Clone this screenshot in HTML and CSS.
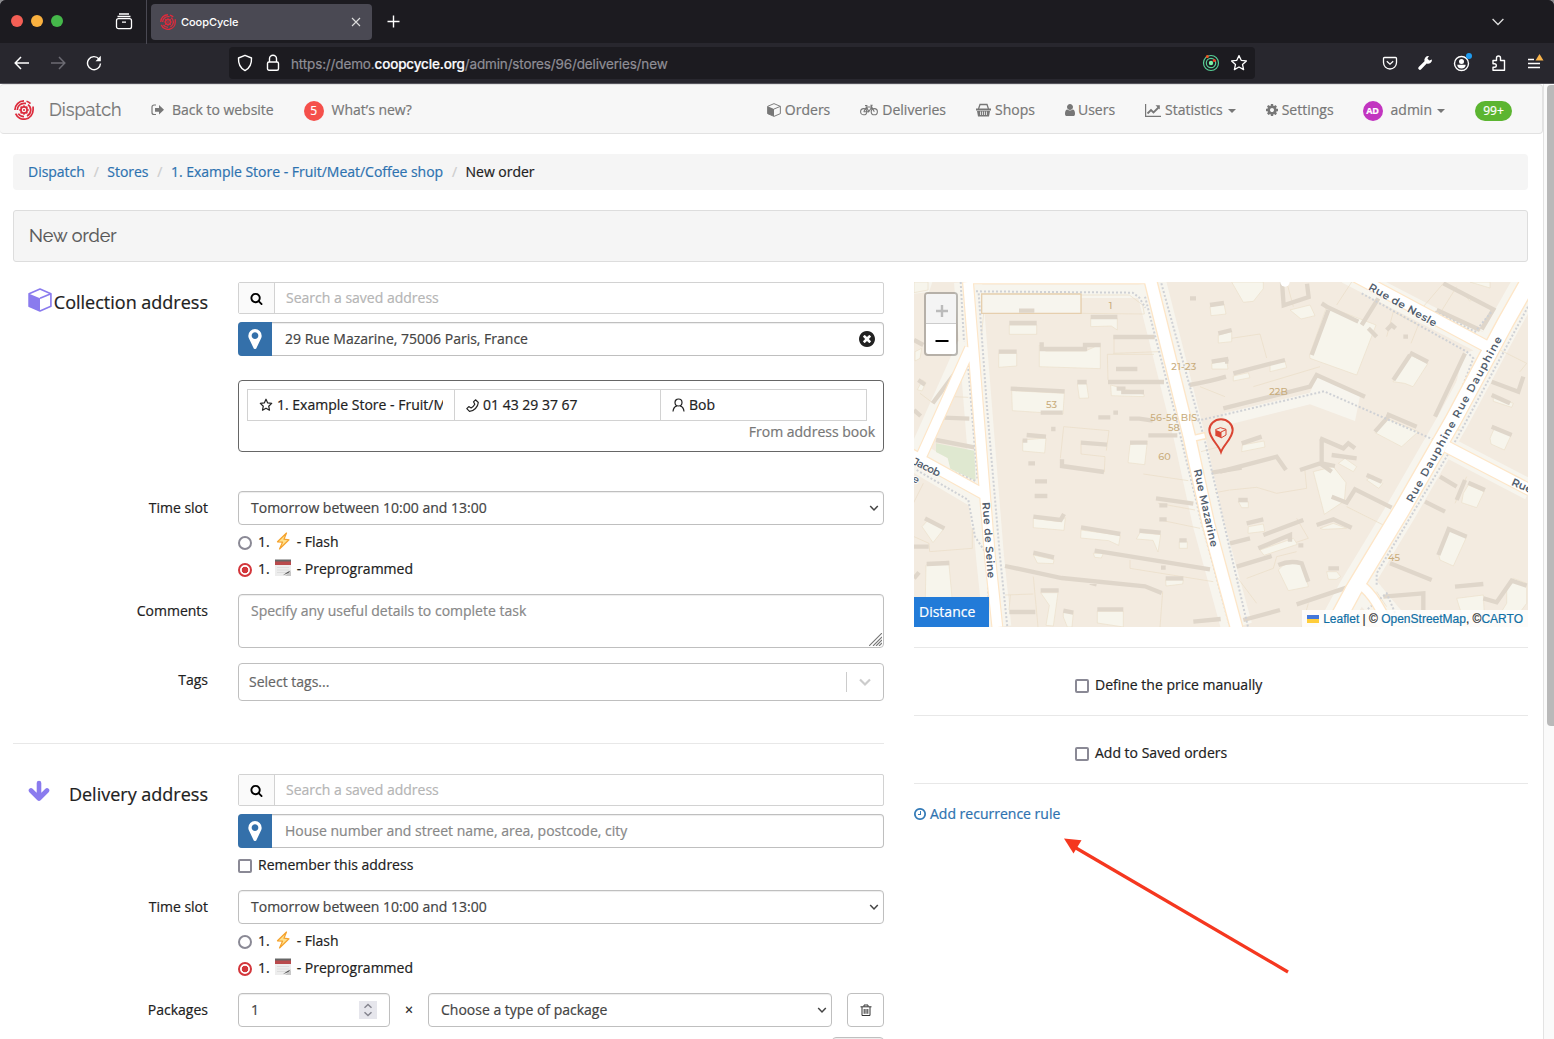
FILE: index.html
```html
<!DOCTYPE html>
<html lang="en">
<head>
<meta charset="utf-8">
<title>CoopCycle</title>
<link rel="stylesheet" href="styles.css">
</head>
<body>
<svg class="defs" width="0" height="0" aria-hidden="true">
  <symbol id="logo" viewBox="0 0 20 20"><g fill="none" stroke="#dc2b3c" stroke-width="1.7"><path d="M10 .9A9.1 9.1 0 0 0 .9 10M1.6 13.6A9.1 9.1 0 0 0 19.1 10V6.5M3.3 10A6.7 6.7 0 0 1 10 3.3h2M4.3 13.6A6.7 6.7 0 0 0 10 16.7M12.5 1.3a9.1 9.1 0 0 1 4 2.4M14 4.6A6.7 6.7 0 0 1 13 16"/><circle cx="10" cy="10" r="3.1"/></g><path d="M10 5.2v2M10 12.8v2M5.2 10h2M12.8 10h2M6.6 6.6L8 8M12 12l1.4 1.4M13.4 6.6L12 8M6.6 13.4L8 12" stroke="#dc2b3c" stroke-width="1.5"/><circle cx="10" cy="10" r="1" fill="#dc2b3c"/></symbol>
  <symbol id="search" viewBox="0 0 1792 1792"><path d="M1216 832q0-185-131.5-316.5t-316.5-131.5-316.5 131.5-131.5 316.5 131.5 316.5 316.5 131.5 316.5-131.5 131.5-316.5zm512 832q0 52-38 90t-90 38q-54 0-90-38l-343-342q-179 124-399 124-143 0-273.5-55.5t-225-150-150-225-55.5-273.5 55.5-273.5 150-225 225-150 273.5-55.5 273.5 55.5 225 150 150 225 55.5 273.5q0 220-124 399l343 343q37 37 37 90z"/></symbol>
  <symbol id="marker" viewBox="384 128 1024 1536"><path d="M1152 640q0-106-75-181t-181-75-181 75-75 181 75 181 181 75 181-75 75-181zm256 0q0 109-33 179l-364 774q-16 33-47.5 52t-67.5 19-67.5-19-46.5-52l-365-774q-33-70-33-179 0-212 150-362t362-150 362 150 150 362z"/></symbol>
  <symbol id="cube" viewBox="0 0 22 22"><path d="M1 5.3L11 1l10 4.3v11.4L11 21 1 16.7z" fill="none" stroke="currentColor" stroke-width="1.5" stroke-linejoin="round"/><path d="M1 5.3L11 9.5V21L1 16.7z" fill="currentColor"/><path d="M11 9.5L21 5.3" stroke="currentColor" stroke-width="1.5"/></symbol>
  <symbol id="bolt" viewBox="0 0 16 18"><path d="M11.5 1L2.5 9.8l5 .4L4.500 17 14 7.800l-5-.6z" fill="#ffe08a" stroke="#f5a22d" stroke-width="1.2" stroke-linejoin="round"/></symbol>
  <symbol id="pad" viewBox="0 0 16 18"><path d="M0 1h16v16H0z" fill="#ededed"/><path d="M0 1h16v5H0z" fill="#b94a4c"/><path d="M0 .5h16v2H0z" fill="#666"/><path d="M2 8.500h12M2 11h12M2 13.500h9" stroke="#ddd"/><path d="M10 17h6v-5z" fill="#c8c8c8"/><path d="M8 16.300l4-3 3.500-1.800-2 2.600z" fill="#555"/></symbol>
  <symbol id="chev" viewBox="0 0 10 10"><path d="M1.2 3L5 7l3.800-4" fill="none" stroke="currentColor" stroke-width="1.5"/></symbol>
</svg>

<header class="browser">
  <div class="tabs">
    <span class="light red"></span><span class="light amber"></span><span class="light green"></span>
    <svg class="view" width="18" height="18" viewBox="0 0 18 18" fill="none" stroke="#fff" stroke-width="1.3"><path d="M4 1h10M2.500 3.500h13"/><rect x="1.500" y="5.700" width="15" height="10" rx="2"/><path d="M7 9.200h4"/></svg>
    <div class="tab"><svg width="16" height="16"><use href="#logo"/></svg><span>CoopCycle</span><svg class="close" width="10" height="10" viewBox="0 0 10 10"><path d="M1 1l8 8M9 1L1 9" stroke="#ddd" stroke-width="1.1"/></svg></div>
    <svg class="plus" width="13" height="13" viewBox="0 0 13 13"><path d="M6.500 .5v12M.5 6.500h12" stroke="#fff" stroke-width="1.4"/></svg>
    <svg class="alltabs" width="12" height="8" viewBox="0 0 12 8"><path d="M.6 1L6 6.500 11.400 1" fill="none" stroke="#ddd" stroke-width="1.3"/></svg>
  </div>
  <div class="toolbar">
    <svg class="back" width="16" height="14" viewBox="0 0 16 14" fill="none" stroke="#fff" stroke-width="1.5"><path d="M15 7H1.500M7 1L1.200 7 7 13"/></svg>
    <svg class="fwd" width="16" height="14" viewBox="0 0 16 14" fill="none" stroke="#6c6b73" stroke-width="1.5"><path d="M1 7h13.500M9 1l5.800 6L9 13"/></svg>
    <svg class="reload" width="16" height="16" viewBox="0 0 16 16"><path d="M13 4A6.500 6.500 0 1 0 14.500 8.500" fill="none" stroke="#fff" stroke-width="1.4"/><path d="M14.800 .8v5.400H9.500z" fill="#fff"/></svg>
    <div class="urlbar">
      <svg width="16" height="18" viewBox="0 0 16 18" fill="none" stroke="#fff" stroke-width="1.4"><path d="M8 1.300L14.500 4c.3 5.500-1.500 10-6.500 12.600C3 14 1.200 9.500 1.500 4z" stroke-linejoin="round"/></svg>
      <svg class="lock" width="14" height="18" viewBox="0 0 14 18" fill="none" stroke="#fff" stroke-width="1.4"><rect x="1.500" y="8" width="11" height="8.300" rx="1.500"/><path d="M3.500 8V4.800a3.500 3.500 0 0 1 7 0V8"/></svg>
      <span class="url">https://demo.<b>coopcycle.org</b>/admin/stores/96/deliveries/new</span>
      <svg class="radar" width="18" height="18" viewBox="0 0 18 18" fill="none" stroke="#57cf96" stroke-width="1.2"><circle cx="9" cy="9" r="7.500"/><circle cx="9" cy="9" r="4.700"/><circle cx="9" cy="9" r="2.200" fill="#7df3a6" stroke="none"/><circle cx="5.300" cy="2.500" r="1.500" fill="#ee5a24" stroke="none"/><circle cx="12.300" cy="6.400" r="1.500" fill="#ee3f24" stroke="none"/></svg>
      <svg width="18" height="18" viewBox="0 0 18 18"><path d="M9 1.600l2.200 4.700 5.200.6-3.900 3.500 1.100 5.200L9 13l-4.600 2.600 1.100-5.200L1.600 6.900l5.200-.6z" fill="none" stroke="#fff" stroke-width="1.3" stroke-linejoin="round"/></svg>
    </div>
    <div class="tools">
      <svg width="16" height="16" viewBox="0 0 16 16" fill="none" stroke="#fff" stroke-width="1.3"><path d="M2.500 2.500h11a1 1 0 0 1 1 1V7.500a6.500 6.500 0 0 1-13 0v-4a1 1 0 0 1 1-1z"/><path d="M4.800 6.300L8 9.200l3.200-2.900"/></svg>
      <svg width="16" height="16" viewBox="0 0 16 16"><path d="M15 4.500a4 4 0 0 1-5.300 4L4.200 14.300a1.500 1.500 0 0 1-2.500-2.400L7.500 6.200A4.100 4.100 0 0 1 12 1l-1.600 2.600 1.800 1.900z" fill="#fff"/></svg>
      <svg width="20" height="20" viewBox="0 0 20 20"><circle cx="9.500" cy="10.500" r="7" fill="none" stroke="#fff" stroke-width="1.4"/><circle cx="9.500" cy="8.500" r="2.500" fill="#fff"/><path d="M5.300 11.800h8.400a4.200 3.600 0 0 1-8.400 0z" fill="#fff"/><circle cx="17" cy="3" r="3" fill="#1e9bf0"/></svg>
      <svg width="16" height="18" viewBox="0 0 16 18"><path d="M2 6.500h3.500V4a2 2 0 0 1 4 0v2.500H13.500V16.300H2v-3h1.500a1.800 1.800 0 0 0 0-3.600H2z" fill="none" stroke="#fff" stroke-width="1.4" stroke-linejoin="round"/></svg>
      <svg width="18" height="20" viewBox="0 0 18 20"><path d="M2 6.500h6M2 10.500h12M2 14.500h12" stroke="#fff" stroke-width="1.4"/><path d="M13.500 1L17.500 7.500H9.500z" fill="#f9b44c"/></svg>
    </div>
  </div>
</header>

<div class="viewport">
<div class="page">
  <nav class="navbar">
    <svg class="brandlogo" width="20" height="20"><use href="#logo"/></svg>
    <span class="brand">Dispatch</span>
    <span class="back-site"><svg width="13" height="12" viewBox="0 0 13 12"><path d="M5 1H3a2 2 0 0 0-2 2v5.500a2 2 0 0 0 2 2h2" fill="none" stroke="#777" stroke-width="1.2"/><path d="M4 4h4V1l5 4.800-5 4.700V7.800H4z" fill="#777"/></svg>Back to website</span>
    <span class="news"><i>5</i>What’s new?</span>
    <ul class="menu">
      <li><svg width="14" height="14"><use href="#cube"/></svg>Orders</li>
      <li><svg width="18" height="12" viewBox="0 0 18 12" fill="none" stroke="#777" stroke-width="1.1"><circle cx="3.700" cy="7.700" r="3.100"/><circle cx="14.300" cy="7.700" r="3.100"/><path d="M3.700 7.700L6.500 3h5.300l2.500 4.700M6.500 3l2.300 4.700 3-4.700-.8-1.800h1.700M3.700 7.700h5.100M5 1.600h2.400"/></svg>Deliveries</li>
      <li><svg width="15" height="14" viewBox="0 0 15 14"><path d="M0 5.500h15v2H0zM1 8h13l-1 5.500H2z" fill="#777"/><path d="M2.500 6L4 1.500h7L12.500 6" fill="none" stroke="#777" stroke-width="1.3"/><path d="M4.500 8.500v3.500M6.500 8.500v3.500M8.500 8.500v3.500M10.500 8.500v3.500" stroke="#f7f7f7" stroke-width=".8"/></svg>Shops</li>
      <li><svg class="usr" width="10" height="12" viewBox="256 128 1280 1536"><path fill="#777" d="M1536 1399q0 109-62.500 187t-150.500 78h-854q-88 0-150.500-78t-62.500-187q0-85 8.500-160.500t31.500-152 58.500-131 94-89 134.500-34.500q131 128 313 128t313-128q76 0 134.500 34.500t94 89 58.500 131 31.500 152 8.500 160.500zm-256-887q0 159-112.500 271.500t-271.500 112.500-271.500-112.500-112.500-271.500 112.500-271.500 271.500-112.500 271.500 112.500 112.500 271.500z"/></svg>Users</li>
      <li><svg width="16" height="13" viewBox="0 0 16 13" fill="none"><path d="M.6 0v12.400H16" stroke="#777" stroke-width="1.2"/><path d="M2.500 9.500L6 6l2.500 2.500L13.500 3.500" stroke="#777" stroke-width="1.8"/><path d="M10.500 1.200h4.300v4.300z" fill="#777"/></svg>Statistics<b class="caret"></b></li>
      <li><svg width="12" height="12" viewBox="128 128 1536 1536"><path fill="#777" d="M1152 896q0-106-75-181t-181-75-181 75-75 181 75 181 181 75 181-75 75-181zm512-109v222q0 12-8 23t-20 13l-185 28q-19 54-39 91 35 50 107 138 10 12 10 25t-9 23q-27 37-99 108t-94 71q-12 0-26-9l-138-108q-44 23-91 38-16 136-29 186-7 28-36 28h-222q-14 0-24.500-8.500t-11.500-21.500l-28-184q-49-16-90-37l-141 107q-10 9-25 9-14 0-25-11-126-114-165-168-7-10-7-23 0-12 8-23 15-21 51-66.500t54-70.500q-27-50-41-99l-183-27q-13-2-21-12.500t-8-23.500v-222q0-12 8-23t19-13l186-28q14-46 39-92-40-57-107-138-10-12-10-24 0-10 9-23 26-36 98.500-107.500t94.500-71.500q13 0 26 10l138 107q44-23 91-38 16-136 29-186 7-28 36-28h222q14 0 24.500 8.500t11.500 21.500l28 184q49 16 90 37l142-107q9-9 24-9 13 0 25 10 129 119 165 170 7 8 7 22 0 12-8 23-15 21-51 66.500t-54 70.500q26 50 41 98l183 28q13 2 21 12.500t8 23.500z"/></svg>Settings</li>
      <li><i class="avatar">AD</i>admin<b class="caret"></b></li>
      <li><i class="count">99+</i></li>
    </ul>
  </nav>

  <ol class="crumbs"><li>Dispatch</li><li>Stores</li><li>1. Example Store - Fruit/Meat/Coffee shop</li><li class="current">New order</li></ol>
  <h1 class="title">New order</h1>

  <main class="columns">
    <form class="form">
      <section>
        <div class="row addr">
          <h2><svg width="24" height="24"><use href="#cube"/></svg>Collection address</h2>
          <div>
            <div class="saved"><span><svg width="13" height="13"><use href="#search"/></svg></span><p>Search a saved address</p></div>
            <div class="place"><span><svg width="14" height="20"><use href="#marker"/></svg></span><p>29 Rue Mazarine, 75006 Paris, France</p><svg class="clear" width="16" height="16" viewBox="128 128 1536 1536"><path d="M1277 1122q0-26-19-45l-181-181 181-181q19-19 19-45 0-27-19-46l-90-90q-19-19-46-19-26 0-45 19l-181 181-181-181q-19-19-45-19-27 0-46 19l-90 90q-19 19-19 46 0 26 19 45l181 181-181 181q-19 19-19 45 0 27 19 46l90 90q19 19 46 19 26 0 45-19l181-181 181 181q19 19 45 19 27 0 46-19l90-90q19-19 19-46zm387-226q0 209-103 385.500t-279.500 279.500-385.500 103-385.500-103-279.500-279.500-103-385.500 103-385.500 279.500-279.500 385.500-103 385.500 103 279.500 279.500 103 385.500z"/></svg></div>
            <div class="book">
              <div class="contact">
                <div><svg width="14" height="14" viewBox="0 0 14 14"><path d="M7 1.200l1.700 3.700 4 .5-3 2.800.8 4L7 10.200l-3.500 2 .8-4-3-2.800 4-.5z" fill="none" stroke="#222" stroke-width="1.2" stroke-linejoin="round"/></svg><span>1. Example Store - Fruit/M</span></div>
                <div><svg width="13" height="13" viewBox="0 0 13 13"><path d="M9.500 .8l2.800 2.700C12 8 8 12 3.500 12.300L.8 9.600l2-2 2.300 1.300C6.700 8 8 6.700 8.800 5.200L7.500 2.800z" fill="none" stroke="#222" stroke-width="1.2" stroke-linejoin="round"/></svg><span>01 43 29 37 67</span></div>
                <div><svg width="13" height="14" viewBox="0 0 13 14" fill="none" stroke="#222" stroke-width="1.2"><circle cx="6.500" cy="4.500" r="3.500"/><path d="M1 13.500c.3-3.300 2.200-5.300 4-5.700M12 13.500c-.3-3.300-2.200-5.300-4-5.700"/></svg><span>Bob</span></div>
              </div>
              <p>From address book</p>
            </div>
          </div>
        </div>
        <div class="row slot"><label>Time slot</label><div>
          <div class="control select">Tomorrow between 10:00 and 13:00<svg width="10" height="10"><use href="#chev"/></svg></div>
          <div class="radio"><i></i>1.<svg width="16" height="18"><use href="#bolt"/></svg>- Flash</div>
          <div class="radio on"><i></i>1.<svg width="16" height="18"><use href="#pad"/></svg>- Preprogrammed</div>
        </div></div>
        <div class="row comments"><label>Comments</label><div class="control area">Specify any useful details to complete task<svg width="13" height="13" viewBox="0 0 13 13"><path d="M0 13L13 0M4 13l9-9M7 13l6-6M10 13l3-3" stroke="#777" stroke-width="1.1"/></svg></div></div>
        <div class="row tags"><label>Tags</label><div class="control tagbox"><span>Select tags...</span><svg width="14" height="14" viewBox="0 0 14 14"><path d="M2 4.500l5 5 5-5" fill="none" stroke="#ccc" stroke-width="2.200"/></svg></div></div>
      </section>
      <hr>
      <section>
        <div class="row addr">
          <h2><svg width="22" height="22" viewBox="0 0 22 22"><path d="M11 3v14M3 10.500l8 8 8-8" fill="none" stroke="#8a7bee" stroke-width="4.600" stroke-linecap="round" stroke-linejoin="round"/></svg>Delivery address</h2>
          <div>
            <div class="saved"><span><svg width="13" height="13"><use href="#search"/></svg></span><p>Search a saved address</p></div>
            <div class="place empty"><span><svg width="14" height="20"><use href="#marker"/></svg></span><p>House number and street name, area, postcode, city</p></div>
            <div class="check"><i></i>Remember this address</div>
          </div>
        </div>
        <div class="row slot2"><label>Time slot</label><div>
          <div class="control select">Tomorrow between 10:00 and 13:00<svg width="10" height="10"><use href="#chev"/></svg></div>
          <div class="radio"><i></i>1.<svg width="16" height="18"><use href="#bolt"/></svg>- Flash</div>
          <div class="radio on"><i></i>1.<svg width="16" height="18"><use href="#pad"/></svg>- Preprogrammed</div>
        </div></div>
        <div class="row packages"><label>Packages</label><div>
          <div class="pack">
            <div class="control qty">1<svg width="18" height="18" viewBox="0 0 18 18"><path d="M0 0h18v18H0z" fill="#e6e6ec"/><path d="M5.500 6.700L9 3.500l3.500 3.200M5.500 11.300L9 14.500l3.500-3.200" fill="none" stroke="#85858f" stroke-width="1.5"/></svg></div>
            <span class="times">×</span>
            <div class="control select kind">Choose a type of package<svg width="10" height="10"><use href="#chev"/></svg></div>
            <div class="control trash"><svg width="12" height="13" viewBox="0 0 12 13" fill="none" stroke="#333"><path d="M.5 2.800h11M4 2.500V1h4v1.500M2 3v8.500h8V3M4.200 5v4.800M6 5v4.800M7.800 5v4.800"/></svg></div>
          </div>
          <div class="control more"></div>
        </div></div>
      </section>
    </form>

    <aside class="side">
      <div class="map">
        <svg class="tiles" viewBox="42 36 1842 1035" preserveAspectRatio="none">
          <rect x="42" y="36" width="1842" height="1035" fill="#f3ebe0"/>
          <!-- pavements -->
          <g fill="none" stroke="#f7f5ee">
            <path d="M204 36L222 260 253 650 270 860 292 1071" stroke-width="84"/>
            <path d="M200 225L50 560" stroke-width="58"/>
            <path d="M30 550L250 680" stroke-width="90"/>
            <path d="M240 64H740" stroke-width="40"/>
            <path d="M751 36L868 500 925 760 1010 1071" stroke-width="94"/>
            <path d="M1885 36L1815 160 1660 450 1505 720 1360 960 1290 1090" stroke-width="92"/>
            <path d="M1340 10L1770 232M1640 530L1890 660" stroke-width="62"/>
            <path d="M1390 950L1490 1071" stroke-width="84"/>
          </g>
          <path d="M1690 250l35-10-60 190-22 16zM1740 180l40-60 20 5-30 70zM42 36h55l-10 30-45 5zM205 690l45 20v110l-36-50zM970 430l260-62 20-50 130 60-15 75-135-50-260 65z" fill="#f7f5ee"/>
          <path d="M108 520l115 22 4 90-76-36-8-32-35-18z" fill="#dfe8d0"/>
          <!-- plot lines -->
          <g fill="none" stroke="#eadcc6" stroke-width="2">
            <path d="M245 72h298v58H245zM543 75h145l40 30 5 27-190-2M245 190l6-60M640 250l137-5M642 195v55M622 253l2 77M622 253h140M730 612l135 20M481 565l10-95 136 12-8 60M543 512v40l72 8-2 46-120-20-12-18M775 700l110 20M780 750l120 25M690 870v25l250 40M315 975l85-3M327 1020l4-45M400 920l14 151M788 965l-8 106M160 380l45 2M42 800l45 20 2 25 128-10v-60M70 640l-30 60M60 370l40 30M130 440l70 4M945 668l44-8M903 545l75-20M900 350l75 30"/>
            <path d="M990 660l80-8 60 18 90-15-6-60M960 210l120-18 20 72M1060 350l200-60M1180 110l-20-74M1310 105l45-69M1380 160l-60-30M1460 200l20-75 75 40-22 55M1570 110l60-70M1620 130l50-80M1660 530l80 60M1700 620l-35 80M1340 710l110 55M1040 925l80-30 10-35 60-15M1190 745l35 60-60 20M1010 920l60 80M1225 1000l-20 71M1430 965l30 45M1860 40v60M1800 240l80 40-20 25"/>
          </g>
          <path d="M245 72h298v58H245z" fill="#f7f5ee" stroke="#e6cfae" stroke-width="4"/>
          <!-- courtyards -->
          <g fill="#f7f5ec" stroke="#ecdfca" stroke-width="2">
            <path d="M328 165h82v28h-82zM572 145h80v35l-18-12-62 2zM418 225l18 18h120l45-20v73l-183-6zM296 250h54v38l-54 4zM335 362l158 8-4 62-152-10zM532 342h28l6 42-28 1zM632 345l100 28v7l-98-3zM368 510l70-6-4 45-66-6zM690 524l52-10-8 70-50-6zM66 770l20-22 48 25-35 45zM78 885l68-12 10 110H76zM400 745l78 10 18-12-4 38-92-8zM543 780l118 16-5 30-30-14-84-8zM720 788l62 6-8 52-15-35-50-4zM400 855l62 14-2 12-48-2zM422 968h52l-14 100-22-2 10-60zM490 1028h30l-4 43h-14l-12-30zM592 1024h78v47l-78-12zM838 815h24v20h-24zM797 930h53l-2 12-50 6zM580 850h30l-6 14-20-2zM42 36h42v24l-42 8zM45 245l20-10-5 30-15 8zM68 330l10 8-12 25-14-4zM930 110l42-8 6 30-45 5zM955 195l40-10v30l-40 4zM935 280l45-8 4 25h-48z"/>
            <path d="M995 36h95v20l-30 38-30 3zM1170 120l60-15 15 32-42 10zM1280 110l30 10 118 45-58 150-140-50-1-10zM1530 255l54 25-45 70-25-10-35-5zM1110 280l45-5 5 18-50 12zM1000 318l45-10 5 15-50 10zM1460 445l95 40-50 45-80-42zM1240 605l60-15 38 48-5 55-60 40zM1027 525l65-12 3 18-70 14zM1315 580l20-15 35 25-10 15zM1400 630l18-14 30 25-12 14zM1015 695h30v18h-20zM1045 770l45-8 4 22-50 6zM1080 840l100-35 12 18-100 33zM1135 900q20-30 75-15l15 65-60 12zM1280 905h30l12 15-12 8h-25zM1260 775l40-15 40 15-70 3zM1680 480l-10 0zM1690 670l15-25 47 20-22 48-45-15zM1615 850l30-70 55 20-40 88-40-18zM1670 985l80-10 3 60-65 8zM1820 960l20-35 40 15v60l-45 60-40-20 25-40zM1780 380l60 20-5 12-55-18zM1770 505l15-35 50 22-22 48-40-18zM1690 70l30 12-10 12zM1710 36h60v18z"/>
          </g>
          <!-- building shade -->
          <g fill="none" stroke="#dfd6ca" stroke-width="13">
            <path d="M328 159h82M357 122h46M572 141h80M640 201h124M425 217v20h130v-12h47M296 245h54M648 297h64M624 336h168M332 356l162 8M422 428h66M532 336h28M650 356h20v10h62M595 442h36M640 428h14M688 446h30l40 6M460 470v14M380 495l58 5M368 512h14M543 518l78 6M486 568v20l126 18M745 496h87M690 518h52M108 510l115 22M130 443l78 3M385 580h20M405 634h36M404 678h38M400 740l82 10 10-18M543 772l118 20M718 782l64 6M768 685l112 16M778 706h24M778 748h22M838 811h22M584 842l346 56M400 848l62 14M315 888l170 36 250 25 50 20M570 938l20 5M422 961h54M490 1022l30 6M592 1018h78M328 1026h78M880 1055l82-8M797 925h53M783 893h14M75 745l58 30M80 882l68-3M42 830h44M42 925l15-18M98 400l85-115M42 210l28 15M55 330l20 14M42 420l20 18M930 105l42-6M955 190l40-10M935 275l50-8M868 345q60-10 110-25M935 608l90-15M870 85h18"/>
            <path d="M1146 36l5 70 75-25-5-40M1265 100l15 10 95 45M1285 120l-50 135M1385 165l50-80M1405 175l25 25M1530 248l54 28M1530 255l-50 75M970 415l260-65 20-35 145 65M1000 310l155-40M975 275h10M1460 432l90 38M1465 440l-40 45M1025 520l60-20M960 605l170-45 28 40M1260 505l70 30 15-15 20 15M1265 510v70l40 8M1295 555l75 10M1200 600l60-20 35 25M1295 680l45 18 25-40 110 55M1400 615l45 20M1015 690h28M1040 760l50-12M1090 795l120-45M990 820l60-15M1075 835l95-40v20M1010 890l105-32M1135 885q35-15 70-5l20 55M1285 895h32M1250 765l50-17 55 25M1190 1003l150-50M1030 1050l110-30M1195 826h15M1620 620l50 30M1670 690l25-60M1575 695l60 30M1705 638l50 22M1640 775l60 25M1645 780l-30 75M1470 880l125 50M1450 980l120-10v50M1665 950l85-8M1750 985l40 12 45-65 45 15M1775 335l80 30 15-45M1775 375l55 25M1775 470l60 25M1610 120l130 60M1630 40l150 78-35 60M1695 250l-90 190M1460 180l15-15 12 10M1510 200h14"/>
          </g>
          <!-- footways -->
          <g fill="none" stroke="#cfd1d5" stroke-width="6" stroke-dasharray="6 6">
            <path d="M182 36l10 180M204 285l28 340M236 70l24 330L300 860l22 211M228 64l470 4 20 15 18 30M784 40l130 470 60 260 70 301M735 80l85 330 80 330 90 331M76 570l155 65M50 600l155 90 20 110 40 60v120M892 452l90-20 290-68 340 150M1385 70l315 175 20 20-65 170M1855 110l-210 400M1610 500L1340 960M1884 110L1690 470 1640 560 1430 910v40M1670 545l220 110M1605 125l120 60 50-60M1490 1040l-30-70-60 50"/>
          </g>
          <!-- carriageways: casing then surface -->
          <g fill="none" stroke="#fde6c8">
            <path d="M204 36L222 260 253 650 270 860 292 1071M210 235L50 590M20 545L250 672" stroke-width="36"/>
            <path d="M751 30L868 500 925 760 1010 1075" stroke-width="42"/><path d="M868 508l50-12" stroke-width="22"/>
            <path d="M1885 36L1815 160 1660 450 1505 720 1360 960 1290 1090" stroke-width="54"/>
            <path d="M1340 5L1780 240M1640 530L1890 660" stroke-width="39"/>
            <path d="M1370 940q50 20 100 140" stroke-width="34"/>
            <path d="M215 37h525" stroke-width="12"/>
          </g>
          <g fill="none" stroke="#fff">
            <path d="M204 36L222 260 253 650 270 860 292 1071M210 235L50 590M20 545L250 672" stroke-width="29"/>
            <path d="M751 30L868 500 925 760 1010 1075" stroke-width="34"/><path d="M868 508l46-11" stroke-width="14"/>
            <path d="M1885 36L1815 160 1660 450 1505 720 1360 960 1290 1090" stroke-width="46"/>
            <path d="M1340 5L1780 240M1640 530L1890 660" stroke-width="32"/>
            <path d="M1370 940q50 20 100 140" stroke-width="26"/>
            <path d="M215 37h525" stroke-width="6"/><circle cx="1155" cy="36" r="14" fill="#fff" stroke="none"/>
          </g>
          <g class="numbers">
            <text x="626" y="116">1</text><text x="814" y="301" textLength="75">21-23</text><text x="438" y="415">53</text><text x="751" y="452" textLength="141">56-56 BIS</text><text x="804" y="482">58</text><text x="775" y="569">60</text><text x="1108" y="375">22B</text><text x="1464" y="873">45</text>
          </g>
          <g class="streets">
            <text transform="translate(247 697) rotate(86)" textLength="229">Rue de Seine</text>
            <text transform="translate(881 600) rotate(77.5)" textLength="238">Rue Mazarine</text>
            <text transform="translate(36 582) rotate(26)" textLength="88">Jacob</text>
            <text transform="translate(34 632) rotate(30)">e</text>
            <text transform="translate(1403 58) rotate(29.5)" textLength="230">Rue de Nesle</text>
            <text transform="translate(1537 700) rotate(-61.3)" textLength="562">Rue Dauphine Rue Dauphine</text>
            <text transform="translate(1832 644) rotate(24)">Rue</text>
          </g>
          <path d="M963 546c-8-22-35-42-35-66a35 32 0 0 1 70 0c0 24-27 44-35 66z" fill="#f3ebe0" fill-opacity=".6" stroke="#da4432" stroke-width="6"/>
          <path d="M946 479l17 7v18l-17-7z" fill="#da4432"/><path d="M946 479l15-6 17 5v17l-15 9v-18l15-7" fill="none" stroke="#da4432" stroke-width="3"/>
        </svg>
        <div class="zoom"><span class="off"><svg width="14" height="14" viewBox="0 0 14 14"><path d="M7 1v12M1 7h12" stroke="#bbb" stroke-width="2.400"/></svg></span><span><svg width="14" height="14" viewBox="0 0 14 14"><path d="M.5 7h13" stroke="#000" stroke-width="2"/></svg></span></div>
        <div class="distance">Distance</div>
        <div class="credit"><i></i><a>Leaflet</a> | © <a>OpenStreetMap</a>, ©<a>CARTO</a></div>
      </div>
      <div class="option"><i></i>Define the price manually</div>
      <div class="option"><i></i>Add to Saved orders</div>
      <div class="recur"><svg width="12" height="12" viewBox="128 128 1536 1536"><path fill="#337ab7" d="M1024 544v448q0 14-9 23t-23 9h-320q-14 0-23-9t-9-23v-64q0-14 9-23t23-9h224v-352q0-14 9-23t23-9h64q14 0 23 9t9 23zm416 352q0-148-73-273t-198-198-273-73-273 73-198 198-73 273 73 273 198 198 273 73 273-73 198-198 73-273zm224 0q0 209-103 385.500t-279.500 279.500-385.500 103-385.500-103-279.500-279.500-103-385.500 103-385.500 279.500-279.500 385.500-103 385.500 103 279.500 279.500 103 385.500z"/></svg>Add recurrence rule</div>
    </aside>
  </main>
</div>
<div class="scroll"><i></i></div>
</div>
<svg class="arrow" width="230" height="140" viewBox="0 0 230 140"><path d="M16 10L228 134" stroke="#f5371f" stroke-width="3.200"/><path d="M4 .5l17.500 1.800L13.500 15.500z" fill="#f5371f"/></svg>
</body>
</html>
```
FILE: styles.css
```css
* { box-sizing: border-box; }
html { background: #8b8b8e; }
body { margin: 0; width: 1554px; height: 1039px; overflow: hidden; position: relative; font: 14px/20px "Open Sans", sans-serif; color: #212121; }
p, h1, h2, ol, ul { margin: 0; padding: 0; font-weight: 400; list-style: none; }
i { font-style: normal; }
svg { flex: none; display: block; }
.defs { position: absolute; }

.browser { height: 84px; background: #2b2a33; border-radius: 6px 6px 0 0; border-bottom: 1px solid #55545c; overflow: hidden; font-family: Inter, sans-serif; }
.tabs { height: 43px; background: #1c1b20; display: flex; align-items: center; padding-left: 11px; }
.light { width: 12px; height: 12px; border-radius: 50%; margin-right: 8px; margin-bottom: 1px; }
.red { background: #f45f55; }
.amber { background: #fab13f; }
.green { background: #45b84a; }
.view { margin-left: 44px; }
.tab { display: flex; align-items: center; width: 221px; height: 36px; margin-left: 18px; padding: 0 11px 0 9px; background: #4a4953; border-radius: 4px; color: #fff; font-size: 11px; font-weight: 500; position: relative; }
.tab::before { content: ""; position: absolute; left: -5px; top: -4px; width: 1px; height: 44px; background: #4a4953; }
.tab span { margin-left: 5px; letter-spacing: -.05px; }
.close { margin-left: auto; }
.plus { margin-left: 15px; }
.alltabs { margin-left: auto; margin-right: 50px; }
.toolbar { height: 40px; display: flex; align-items: center; padding-left: 14px; background: #28272e; }
.fwd { margin-left: 20px; }
.reload { margin-left: 20px; }
.urlbar { display: flex; align-items: center; width: 1026px; height: 32px; margin-left: 127px; padding: 0 7px 0 8px; border-radius: 4px; background: #1c1b20; }
.lock { margin-left: 13px; }
.url { margin-left: 11px; padding-top: 2px; color: #8f8e96; font-size: 13.5px; letter-spacing: -.15px; -webkit-text-stroke: .2px; }
.url b { color: #fbfbfe; font-weight: 500; }
.radar { margin-left: auto; margin-right: 10px; }
.tools { display: flex; align-items: center; justify-content: space-between; width: 162px; margin-left: 127px; }

.viewport { display: flex; height: 955px; background: #fff; overflow: hidden; -webkit-text-stroke: .2px; }
.page { width: 1543px; flex: none; }
.scroll { flex: 1; border-left: 1px solid #e3e3e3; background: #fafafa; padding: 1px 0 0 3px; }
.scroll i { display: block; height: 641px; background: #b9b9b9; border-radius: 4px 0 0 4px; }

.navbar { display: flex; align-items: center; height: 50px; padding: 2px 15px 0 14px; background: #f7f7f7; border: 1px solid #e2e2e2; border-left: 0; border-radius: 4px; color: #777; }
.brand { margin-left: 15px; font: 18px/20px Raleway, Lato, sans-serif; width: 72px; }
.back-site { display: flex; align-items: center; gap: 8px; margin-left: 30px; letter-spacing: -.02px; }
.news { display: flex; align-items: center; gap: 8px; margin-left: 30px; letter-spacing: -.02px; }
.news i { position: relative; top: 1px; width: 20px; height: 20px; border-radius: 50%; background: #f5504b; color: #fff; text-align: center; font-size: 12px; }
.menu { display: flex; margin-left: auto; }
.menu li { display: flex; align-items: center; padding: 0 15px; gap: 4px; white-space: nowrap; }
.menu .usr { margin-right: -1px; }
.caret { border: 4px solid transparent; border-top-color: #777; border-bottom: 0; margin: 2px 0 0 1px; }
.avatar { position: relative; top: 1px; width: 20px; height: 20px; margin-right: 3px; border-radius: 50%; background: #c235c0; color: #fff; font-size: 9px; font-weight: 700; text-align: center; }
.menu .avatar { margin-left: -1px; margin-right: 4px; }
.count { position: relative; top: 1px; width: 37px; height: 20px; border-radius: 10px; background: #5cb531; color: #fff; font-size: 12px; text-align: center; }

.crumbs { display: flex; margin: 20px 15px 0 13px; height: 36px; padding: 8px 15px; background: #f5f5f5; border-radius: 4px; color: #2d72b0; letter-spacing: -.02px; }
.crumbs li + li::before { content: "/"; color: #ccc; padding: 0 8.5px 0 8.8px; }
.crumbs .current { color: #212121; }
.title { margin: 20px 15px 0 13px; height: 52px; padding: 15px; background: #f5f5f5; border: 1px solid #ddd; border-radius: 3px; color: #555; font: 18px/20px Raleway, Lato, sans-serif; }

.columns { display: grid; grid-template-columns: 871px 614px; gap: 30px; margin: 20px 0 0 13px; }
.row { display: grid; grid-template-columns: 195px 646px; gap: 30px; }
.row label { text-align: right; padding-top: 7px; }
.row h2 { display: flex; justify-content: space-between; padding: 10px 0 0 15px; font-size: 18px; line-height: 20px; white-space: nowrap; color: #212121; height: 32px; }
.row h2 svg { color: #8a7bee; margin-top: -4px; margin-right: -1px; }
.saved { display: flex; height: 32px; border: 1px solid #d2d2d2; border-radius: 2px; color: #b5b5b5; }
.saved span { width: 36px; border-right: 1px solid #d2d2d2; background: #fafafa; display: flex; align-items: center; justify-content: center; }
.saved p { padding: 5px 11px; }
.place { display: flex; align-items: center; height: 34px; margin-top: 8px; border: 1px solid #bfbfbf; border-left: 0; border-radius: 4px; color: #444; box-shadow: inset 0 1px 1px rgba(0,0,0,.075); }
.place span { width: 34px; height: 34px; display: flex; align-items: center; justify-content: center; background: #3470aa; fill: #fff; border-radius: 4px 0 0 4px; }
.place p { padding-left: 13px; }
.place.empty p { color: #888; }
.clear { margin-left: auto; margin-right: 8px; fill: #222; }
.book { margin-top: 24px; height: 72px; border: 1px solid #666; border-radius: 4px; padding: 8px; }
.contact { display: grid; grid-template-columns: 207px 206px 205px; width: 620px; height: 32px; border: 1px solid #d2d2d2; }
.contact div { display: flex; align-items: center; gap: 4px; padding: 0 11px; overflow: hidden; border-right: 1px solid #d2d2d2; }
.contact div:last-child { border: 0; }
.contact span { overflow: hidden; white-space: nowrap; }
.book p { text-align: right; color: #777; margin-top: 1px; }
.control { height: 34px; border: 1px solid #bfbfbf; border-radius: 4px; padding: 6px 12px; color: #444; box-shadow: inset 0 1px 1px rgba(0,0,0,.075); background: #fff; }
.select { display: flex; align-items: center; justify-content: space-between; padding-right: 4px; }
.slot { margin-top: 39px; }
.slot2 { margin-top: 12px; }
.radio, .check { display: flex; align-items: center; height: 26px; margin-top: 1px; white-space: pre; }
.select + .radio { margin-top: 4px; }
.check { margin-top: 4px; }
.radio svg { margin: 0 6px 0 5px; position: relative; top: -1px; }
.radio i { width: 14px; height: 14px; margin: 2px 6px 0 0; border: 2px solid #8a8995; border-radius: 50%; }
.radio.on i { border-color: #d3363b; background: radial-gradient(circle, #d3363b 3px, #fff 3.6px); }
.check i, .option i { width: 14px; height: 14px; margin: 2px 6px 0 0; border: 2px solid #8a8995; border-radius: 2px; background: #fff; }
.comments { margin-top: 12px; }
.area { height: 54px; color: #888; display: flex; justify-content: space-between; padding-right: 1px; }
.area svg { align-self: flex-end; margin-bottom: -5px; }
.tags { margin-top: 15px; }
.tagbox { height: 38px; padding: 8px 11px 0 10px; display: flex; justify-content: space-between; color: #666; box-shadow: none; }
.tagbox svg { margin-top: 3px; }
.tagbox span { flex: 1; border-right: 1px solid #ccc; margin-right: 11px; height: 20px; }
hr { margin: 42px 0 30px; height: 1px; border: 0; background: #e8e8e8; }
.packages { margin-top: 12px; }
.pack { display: flex; align-items: center; }
.qty { width: 152px; display: flex; justify-content: space-between; align-items: center; }
.times { width: 38px; text-align: center; font-size: 14px; }
.kind { width: 404px; margin-right: 15px; }
.trash { width: 37px; display: flex; align-items: center; justify-content: center; box-shadow: none; padding: 0; }
.more { width: 52px; margin: 10px 0 0 auto; }

.map { position: relative; height: 345px; overflow: hidden; }
.tiles { width: 614px; height: 345px; -webkit-text-stroke: 0; }
.numbers { font: 500 29px Montserrat, Inter, sans-serif; fill: #c9ad7d; }
.streets { font: 600 32px Montserrat, "Open Sans", sans-serif; fill: #525d6c; stroke: #fff; stroke-width: 4px; paint-order: stroke; }
.streets text { -webkit-text-stroke: 4px #fff; }
.zoom { position: absolute; left: 10px; top: 10px; width: 34px; height: 64px; border: 2px solid rgba(0,0,0,.25); border-radius: 4px; background: #fff; background-clip: padding-box; overflow: hidden; }
.zoom span { display: flex; align-items: center; justify-content: center; height: 30px; padding: 4px 0 0 2px; }
.zoom .off { background: #f4f4f4; border-bottom: 1px solid #ccc; height: 30px; }
.distance { position: absolute; left: 0; bottom: 0; width: 75px; height: 30px; padding: 5px; background: #227bd8; color: #fff; }
.credit { position: absolute; right: 0; bottom: 0; height: 17px; padding: 1px 5px 0; display: flex; align-items: center; white-space: pre; background: rgba(255,255,255,.8); font: 12px/17px "Liberation Sans", sans-serif; letter-spacing: 0; color: #333; }
.credit a { color: #0f6fa5; }
.credit i { width: 12px; height: 8px; margin-right: 4px; background: linear-gradient(#4377da 50%, #ffcd3a 50%); }
.option { display: flex; align-items: center; height: 68px; padding: 6px 0 0 161px; border-top: 1px solid #e8e8e8; }
.map + .option { margin-top: 20px; }
.recur { display: flex; align-items: center; gap: 4px; height: 60px; border-top: 1px solid #e8e8e8; color: #2d72b0; }
.arrow { position: absolute; left: 1060px; top: 838px; }
```
